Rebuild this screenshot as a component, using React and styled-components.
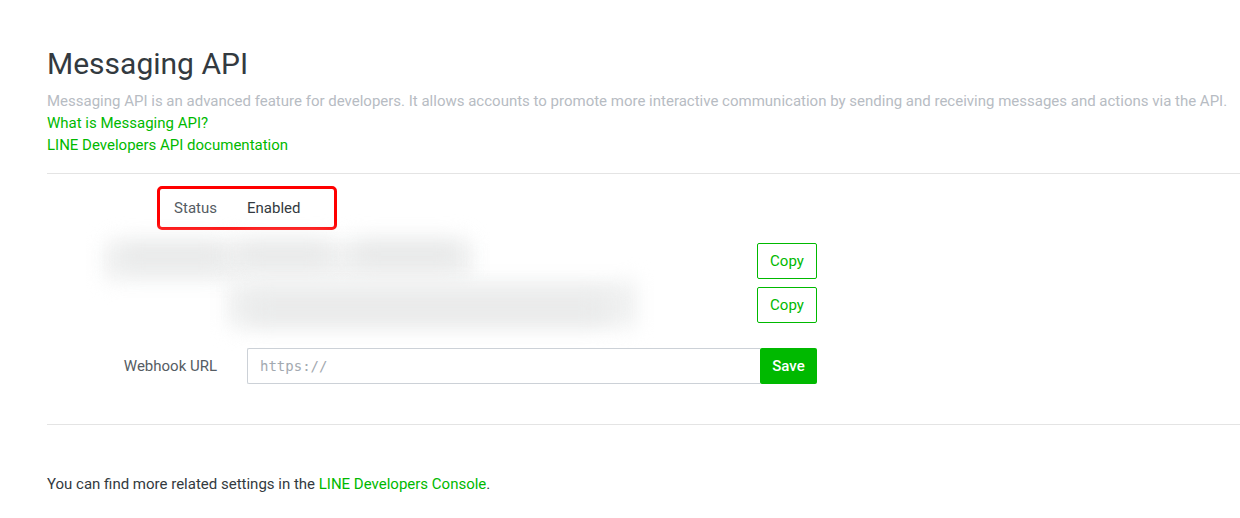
import React from "react";
import styled, { createGlobalStyle } from "styled-components";

const GlobalStyle = createGlobalStyle`
  html, body { margin: 0; padding: 0; background: #fff; }
  body { font-family: Roboto, "Noto Sans", Arial, sans-serif; color: #333; overflow: hidden; }
  * { box-sizing: border-box; }
`;

const GREEN = "#00b900";

const Page = styled.div`
  padding: 44px 0 0 47px;
  width: 1240px;
`;

const Title = styled.h1`
  margin: 0;
  font-size: 30px;
  font-weight: 400;
  line-height: 40px;
  color: #333a40;
`;

const Desc = styled.p`
  margin: 6px 0 0;
  font-size: 15px;
  line-height: 22px;
  color: #b7bcc3;
`;

const LinkLine = styled.a`
  display: block;
  font-size: 15px;
  line-height: 22px;
  color: ${GREEN};
  text-decoration: none;
`;

const Divider = styled.hr`
  border: 0;
  border-top: 1px solid #e4e4e4;
  margin: ${(p) => p.$mt}px 0 0;
`;

const Form = styled.div`
  display: flex;
  flex-direction: column;
  padding-top: ${(p) => p.$pt || 0}px;
`;

const Row = styled.div`
  position: relative;
  display: grid;
  grid-template-columns: 170px 570px;
  column-gap: 30px;
  align-items: center;
  min-height: ${(p) => p.$h}px;
  margin-top: ${(p) => p.$mt || 0}px;
`;

const Label = styled.div`
  text-align: right;
  font-size: 15px;
  color: #555c63;
`;

const Value = styled.div`
  font-size: 15px;
  color: #333a40;
  display: flex;
  align-items: center;
  justify-content: ${(p) => p.$justify || "flex-start"};
`;

const Highlight = styled.div`
  position: absolute;
  left: 110px;
  top: 0;
  width: 180px;
  height: 44px;
  border: 3px solid #ff0000;
  border-radius: 5px;
  pointer-events: none;
`;

const Blur = styled.div`
  position: absolute;
  left: ${(p) => p.$l}px;
  top: ${(p) => p.$t}px;
  width: ${(p) => p.$w}px;
  height: ${(p) => p.$h}px;
  background: ${(p) => p.$c || "#e6e7e7"};
  filter: blur(${(p) => p.$r || 9}px);
  pointer-events: none;
`;

const OutlineButton = styled.button`
  width: 60px;
  height: 36px;
  border: 1px solid ${GREEN};
  border-radius: 2px;
  background: #fff;
  color: ${GREEN};
  font-family: Roboto, sans-serif;
  font-size: 15px;
  padding: 0;
`;

const InputGroup = styled.div`
  display: flex;
  width: 100%;
  height: 36px;
`;

const Input = styled.input`
  flex: 1;
  height: 36px;
  border: 1px solid #ccd1d7;
  border-right: 0;
  border-radius: 2px 0 0 2px;
  padding: 0 12px;
  font-family: "DejaVu Sans Mono", "Liberation Mono", monospace;
  font-size: 14px;
  color: #333;
  outline: none;
  &::placeholder { color: #a3a9b0; }
`;

const SaveButton = styled.button`
  width: 57px;
  height: 36px;
  border: 0;
  border-radius: 2px;
  background: ${GREEN};
  color: #fff;
  font-family: Roboto, sans-serif;
  font-size: 15px;
  font-weight: 500;
  padding: 0;
`;

const Footer = styled.p`
  margin: 50px 0 0;
  font-size: 15px;
  color: #333a40;
`;

const InlineLink = styled.a`
  color: ${GREEN};
  text-decoration: none;
`;

export default function App() {
  return (
    <>
      <GlobalStyle />
      <Page>
        <Title>Messaging API</Title>
        <Desc>
          Messaging API is an advanced feature for developers. It allows accounts to promote more interactive
          communication by sending and receiving messages and actions via the API.
        </Desc>
        <LinkLine href="#">What is Messaging API?</LinkLine>
        <LinkLine href="#">LINE Developers API documentation</LinkLine>
        <Divider $mt={17} />
        <Form $pt={12}>
          <Row $h={44}>
            <Label>Status</Label>
            <Value>Enabled</Value>
            <Highlight />
          </Row>
          <Row $h={36} $mt={13}>
            <Blur $l={56} $t={0} $w={370} $h={38} $c="#f3f4f4" $r={10} />
            <Blur $l={70} $t={2} $w={110} $h={22} $c="#e5e6e6" $r={12} />
            <Blur $l={190} $t={0} $w={95} $h={22} $c="#e5e6e6" $r={12} />
            <Blur $l={305} $t={0} $w={110} $h={22} $c="#e4e5e5" $r={12} />
            <Label />
            <Value $justify="flex-end">
              <OutlineButton>Copy</OutlineButton>
            </Value>
          </Row>
          <Row $h={36} $mt={8}>
            <Blur $l={180} $t={-6} $w={410} $h={46} $c="#f0f1f1" $r={10} />
            <Blur $l={200} $t={10} $w={360} $h={24} $c="#e8e9e9" $r={12} />
            <Label />
            <Value $justify="flex-end">
              <OutlineButton>Copy</OutlineButton>
            </Value>
          </Row>
          <Row $h={36} $mt={25}>
            <Label>Webhook URL</Label>
            <Value>
              <InputGroup>
                <Input placeholder="https://" />
                <SaveButton>Save</SaveButton>
              </InputGroup>
            </Value>
          </Row>
        </Form>
        <Divider $mt={40} />
        <Footer>
          You can find more related settings in the <InlineLink href="#">LINE Developers Console</InlineLink>.
        </Footer>
      </Page>
    </>
  );
}
